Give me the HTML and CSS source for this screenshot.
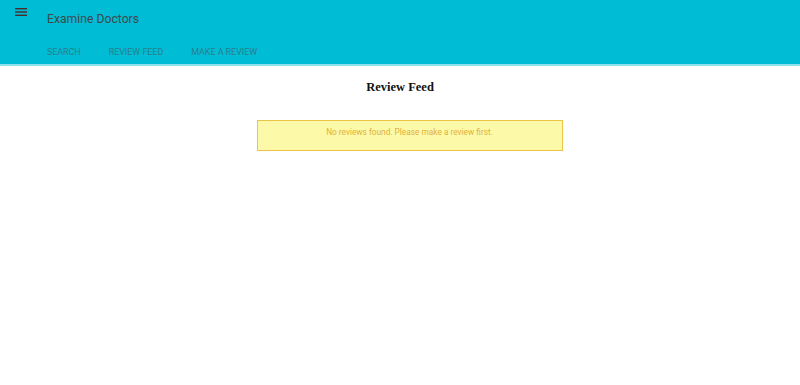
FILE: index.html
```html
<!DOCTYPE html>
<html>
<head>
<meta charset="utf-8">
<link rel="stylesheet" href="styles.css">
</head>
<body>
<header class="appbar">
  <div class="toprow">
    <button class="menu" aria-label="menu">
      <svg width="12" height="8" viewBox="0 0 12 8"><rect x="0" y="0" width="12" height="1.4" fill="#4a2c2c"/><rect x="0" y="3.3" width="12" height="1.4" fill="#4a2c2c"/><rect x="0" y="6.6" width="12" height="1.4" fill="#4a2c2c"/></svg>
    </button>
    <h1 class="title">Examine Doctors</h1>
  </div>
  <nav class="tabs">
    <a class="tab">SEARCH</a>
    <a class="tab">REVIEW FEED</a>
    <a class="tab">MAKE A REVIEW</a>
  </nav>
</header>
<main class="content">
  <h2 class="heading">Review Feed</h2>
  <div class="notice">No reviews found. Please make a review first.</div>
</main>
</body>
</html>
```
FILE: styles.css
```css
html, body { margin: 0; padding: 0; background: #fff; }
body { font-family: Roboto, "Liberation Sans", Arial, sans-serif; width: 800px; height: 385px; overflow: hidden; }
.appbar { background: #00bcd4; height: 64px; border-bottom: 2px solid #8fe2ec; box-sizing: content-box; }
.toprow { display: flex; align-items: flex-start; height: 38px; }
.menu { background: none; border: 0; padding: 0; margin: 8px 0 0 15px; width: 12px; height: 8px; display: flex; }
.title { margin: 10px 0 0 20px; font-size: 12.2px; font-weight: 400; color: #3d4a4c; line-height: 18px; }
.tabs { display: flex; gap: 28px; padding-left: 47px; height: 28px; align-items: center; }
.tab { font-size: 8.9px; color: #25808e; letter-spacing: 0; }
.content { display: flex; flex-direction: column; align-items: center; }
.heading { font-family: "Liberation Serif", serif; font-weight: 700; font-size: 12.5px; color: #111; margin: 13px 0 0; line-height: 16px; }
.notice { margin: 25px 0 0 19px; width: 304px; height: 29px; box-sizing: content-box; background: #fcfaa8; border: 1px solid #eac54a; color: #e2b03a; font-size: 8.3px; text-align: center; line-height: 22px; }
```
